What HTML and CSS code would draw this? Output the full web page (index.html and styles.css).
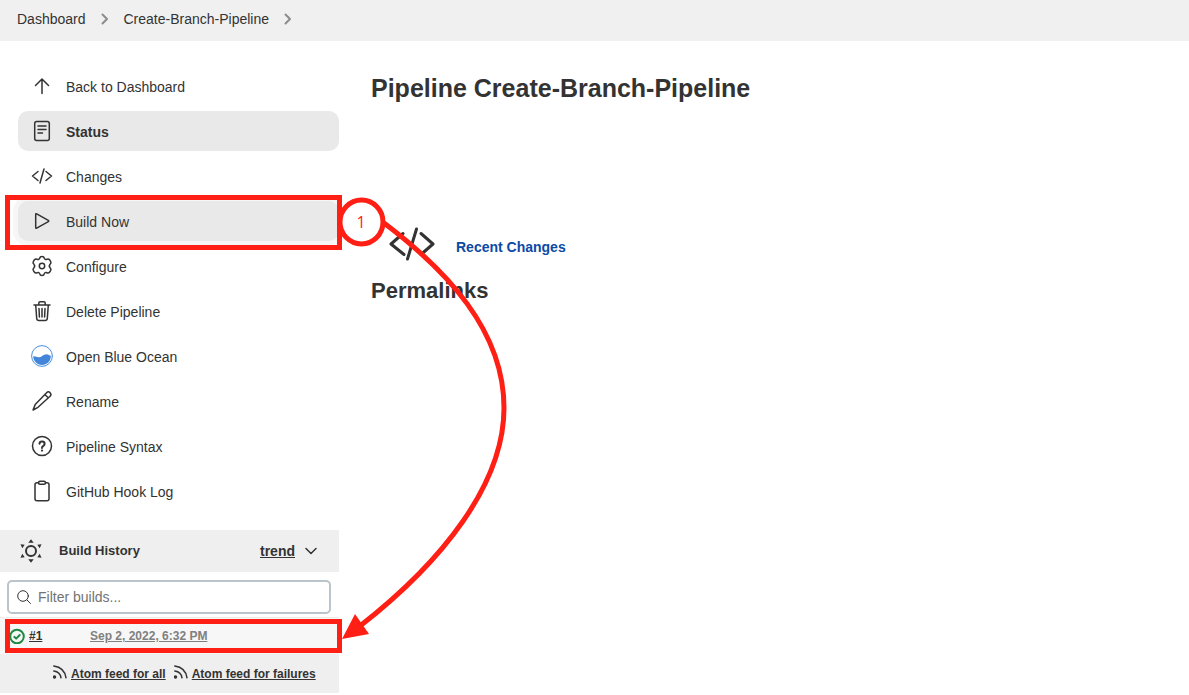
FILE: index.html
```html
<!DOCTYPE html>
<html lang="en">
<head>
<meta charset="utf-8">
<title>Create-Branch-Pipeline</title>
<link rel="stylesheet" href="styles.css">
</head>
<body>
<nav class="breadcrumbs" aria-label="Breadcrumb">
  <a href="#">Dashboard</a>
  <svg class="crumb-arrow" viewBox="0 0 8 12"><path d="M1.500 1.500 6 6l-4.500 4.500"/></svg>
  <a href="#">Create-Branch-Pipeline</a>
  <svg class="crumb-arrow" viewBox="0 0 8 12"><path d="M1.500 1.500 6 6l-4.500 4.500"/></svg>
</nav>
<div class="page">
  <aside class="sidebar">
    <nav class="tasks" aria-label="Tasks">
      <a class="task" href="#"><svg class="icon" viewBox="0 0 24 24"><path d="M12 19.500V5M5.500 11.500 12 5l6.500 6.500"/></svg>Back to Dashboard</a>
      <a class="task active" href="#"><svg class="icon" viewBox="0 0 24 24"><rect x="4.700" y="2.500" width="14.600" height="19" rx="2"/><path d="M8 7h8M8 10.500h8M8 14h4.500"/></svg>Status</a>
      <a class="task" href="#"><svg class="icon" viewBox="0 0 24 24"><path d="M8 7.500 2.500 12 8 16.500M16 7.500l5.500 4.500-5.500 4.500M14 5l-4 14"/></svg>Changes</a>
      <a class="task focused" href="#"><svg class="icon" viewBox="0 0 24 24"><path d="M5.700 5.400v13.200q0 1 1 .5l11.600-6.500q.9-.6 0-1.200L6.700 4.900q-1-.5-1 .5Z"/></svg>Build Now</a>
      <a class="task" href="#"><svg class="icon" viewBox="0 0 24 24"><circle cx="12" cy="12" r="2.700"/><path d="M9.800 4.100Q10 2.500 12 2.500t2.200 1.600q.7 2 2.600 1.200 1.700-.8 2.900.6l1 1.700q.8 1.500-.6 2.600-1.600 1.800 0 3.600 1.400 1.100.6 2.600l-1 1.700q-1.200 1.400-2.900.6-1.900-.8-2.600 1.200-.2 1.600-2.200 1.600t-2.200-1.600q-.7-2-2.600-1.200-1.700.8-2.900-.6l-1-1.700q-.8-1.500.6-2.600 1.600-1.800 0-3.600-1.400-1.100-.6-2.600l1-1.700q1.200-1.400 2.900-.6 1.900.8 2.600-1.200Z"/></svg>Configure</a>
      <a class="task" href="#"><svg class="icon" viewBox="0 0 24 24"><path d="M4 6h16M5.700 6l1 13.500q.2 2 2.200 2h6.200q2 0 2.200-2l1-13.500M8.800 6V4q0-1.300 1.300-1.300h3.800q1.300 0 1.300 1.300v2M9 9.500l.4 8.500M12 9.500V18M15 9.500l-.4 8.500"/></svg>Delete Pipeline</a>
      <a class="task" href="#"><svg class="icon" viewBox="0 0 24 24"><circle class="ocean-ring" cx="12" cy="12" r="10.400"/><path class="ocean-wave" d="M3.200 12.300c2.300-.5 3.400 1.200 6 .9 3-.4 4.300-3.200 7.300-3 2 .1 3 1.400 4.300 1.600.3 5.500-4 9.200-8.800 9.200s-8.900-4-8.800-8.700Z"/></svg>Open Blue Ocean</a>
      <a class="task" href="#"><svg class="icon" viewBox="0 0 24 24"><path d="M16.600 3.700q1.800-1.800 3.500 0t0 3.600L8 18.300l-5 2.700 2.200-5.400ZM15.100 5.700l3.100 3.100"/></svg>Rename</a>
      <a class="task" href="#"><svg class="icon" viewBox="0 0 24 24"><circle cx="12" cy="12" r="9.500"/><path class="thick" d="M9.500 9.700q.2-2.300 2.600-2.200 2.500.1 2.500 2.200 0 1.300-1.300 2.200-1.300.8-1.300 2"/><circle class="solid" cx="12" cy="16.600" r="1.100"/></svg>Pipeline Syntax</a>
      <a class="task" href="#"><svg class="icon" viewBox="0 0 24 24"><path d="M8.500 3.700H7q-2 0-2 2v14q0 2 2 2h10q2 0 2-2v-14q0-2-2-2h-1.500"/><rect x="8.500" y="2.300" width="7" height="3" rx="1.500"/></svg>GitHub Hook Log</a>
    </nav>
    <section class="history">
      <header class="history-head">
        <svg class="icon" viewBox="0 0 24 24"><circle class="sun" cx="12" cy="12" r="5"/><path class="solid" d="m9.300 3.700 2.700-3.400 2.700 3.400ZM9.300 20.300l2.700 3.400 2.700-3.400ZM1.500 5.300l4.200.5L3.300 9.300ZM22.500 5.300l-4.200.5 2.400 3.500ZM1.500 18.700l4.200-.5-2.400-3.500ZM22.500 18.700l-4.200-.5 2.400-3.500Z"/></svg>
        <h2>Build History</h2>
        <a class="trend" href="#">trend</a>
        <svg class="chevron" viewBox="0 0 12 12"><path d="m1 3.500 5 5 5-5"/></svg>
      </header>
      <label class="filter">
        <svg viewBox="0 0 16 16"><circle cx="7" cy="7" r="5.300"/><path d="m10.900 10.900 3.600 3.600"/></svg>
        <input type="text" placeholder="Filter builds..." aria-label="Filter builds">
      </label>
      <div class="build">
        <svg viewBox="0 0 16 16"><circle cx="8" cy="8.500" r="6.800"/><path d="m5.400 8.900 1.800 1.700 3.500-3.600"/></svg>
        <a class="number" href="#">#1</a>
        <a class="date" href="#">Sep 2, 2022, 6:32 PM</a>
      </div>
      <footer class="feeds">
        <a href="#"><svg viewBox="0 0 14 14"><circle cx="1.500" cy="12" r="1"/><path d="M.8 6q6.500 1 7.200 6.800M.8 1Q11.500 2.500 13 12.800"/></svg><span>Atom feed for all</span></a>
        <a href="#"><svg viewBox="0 0 14 14"><circle cx="1.500" cy="12" r="1"/><path d="M.8 6q6.500 1 7.200 6.800M.8 1Q11.500 2.500 13 12.800"/></svg><span>Atom feed for failures</span></a>
      </footer>
    </section>
  </aside>
  <main class="content">
    <h1>Pipeline Create-Branch-Pipeline</h1>
    <a class="recent" href="#">
      <svg viewBox="0 0 48 36"><path d="M15 7.500 3 18l13 10.500M33 7.500 45 18 33 28.500M28.500 3l-9 30"/></svg>
      <span>Recent Changes</span>
    </a>
    <h2>Permalinks</h2>
  </main>
</div>
<svg class="callout" viewBox="0 0 520 660" aria-hidden="true">
  <rect x="7.500" y="197.500" width="332" height="50"/>
  <rect x="7.500" y="621.500" width="332" height="29"/>
  <ellipse cx="361.500" cy="222" rx="21.500" ry="22"/>
  <path d="M384 223C446 270 504 330 504 408c0 76-62 154-144 218"/>
  <path class="head" d="m342 639 13-25 14 20Z"/>
  <text x="361" y="228">1</text>
</svg>
</body>
</html>
```
FILE: styles.css
```css
* { box-sizing: border-box; }
body {
  margin: 0;
  position: relative;
  background: #fff;
  color: #333;
  font: 14px/20px "Liberation Sans", Arial, sans-serif;
}
a { color: inherit; text-decoration: none; }
h1, h2 { margin: 0; font-weight: bold; }
svg { flex: none; fill: none; stroke: #333; stroke-linecap: round; stroke-linejoin: round; }

.breadcrumbs {
  display: flex;
  align-items: center;
  gap: 15px;
  height: 41px;
  padding: 0 17px 3px;
  background: #f0f0f0;
}
.crumb-arrow { width: 8px; height: 12px; stroke: #8c8c8c; stroke-width: 2; }

.page { display: flex; }
.sidebar { flex: none; width: 339px; padding-top: 25px; }
.tasks { display: flex; flex-direction: column; gap: 5px; padding-left: 18px; }
.task {
  display: flex;
  align-items: center;
  gap: 12px;
  height: 40px;
  padding: 2px 12px 0;
  border-radius: 10px;
}
.icon { width: 24px; height: 24px; stroke-width: 1.500; }
.task .icon { margin-bottom: 2px; }
.active { background: #e9e9e9; font-weight: bold; }
.focused { background: #e9e9e9; box-shadow: 0 0 0 5px #f6f6f6; }
.ocean-ring { stroke: #4a90e2; stroke-width: 1; }
.ocean-wave { fill: #4386d9; stroke: none; }
.thick { stroke-width: 2; }
.solid { fill: #333; stroke: none; }
.sun { stroke-width: 2; }

.history { margin-top: 19px; }
.history-head {
  display: flex;
  align-items: center;
  height: 42px;
  padding: 0 22px 0 19px;
  background: #efefef;
}
.history-head h2 { flex: 1; padding-left: 16px; font-size: 13px; line-height: 20px; }
.trend { font-weight: bold; text-decoration: underline; }
.chevron { width: 12px; height: 12px; margin-left: 10px; stroke-width: 1.500; }
.filter {
  display: flex;
  align-items: center;
  gap: 6px;
  height: 34px;
  margin: 8px 8px 3px 7px;
  padding: 0 8px 0 7px;
  border: 2px solid #bac4ca;
  border-radius: 5px;
}
.filter svg { width: 16px; height: 16px; }
.filter input {
  flex: 1;
  min-width: 0;
  padding: 0;
  border: 0;
  outline: 0;
  background: none;
  color: #333;
  font: inherit;
}
.filter input::placeholder { color: #737373; opacity: 1; }
.build {
  display: flex;
  align-items: center;
  height: 37px;
  padding: 0 9px;
  border-top: 1px solid #ececec;
  background: #f7f7f7;
  font-size: 12px;
  font-weight: bold;
}
.build svg { width: 16px; height: 16px; stroke: #1e8a44; stroke-width: 2; }
.build a { text-decoration: underline; }
.number { width: 61px; margin-left: 4px; }
.date { color: #808080; }
.feeds {
  display: flex;
  gap: 8px;
  height: 39px;
  padding-left: 53px;
  background: #efefef;
  font-size: 12px;
  font-weight: bold;
}
.feeds a { display: flex; align-items: center; gap: 4px; }
.feeds span { text-decoration: underline; }
.feeds svg { width: 14px; height: 14px; margin-bottom: 4px; stroke-width: 1.500; }
.feeds circle { fill: #333; }

.content { flex: 1; padding: 32px; }
.content h1 { font-size: 25px; line-height: 30px; }
.content h2 { margin-top: 15px; font-size: 22px; line-height: 28px; }
.recent {
  display: flex;
  align-items: center;
  gap: 20px;
  width: max-content;
  height: 36px;
  margin-top: 123px;
  padding-left: 17px;
  color: #0b4aa5;
  font-weight: bold;
}
.recent svg { width: 48px; height: 36px; stroke-width: 3; }
.recent span { padding-top: 6px; }

.callout {
  position: absolute;
  top: 0;
  left: 0;
  width: 520px;
  height: 660px;
  pointer-events: none;
  stroke: #ff1f14;
  stroke-width: 5;
  stroke-linejoin: miter;
  stroke-linecap: butt;
}
.callout ellipse { fill: #fff; }
.callout .head { fill: #ff1f14; stroke: none; }
.callout text { fill: #ff1f14; stroke: none; font: 16px "Open Sans", sans-serif; text-anchor: middle; }
```
